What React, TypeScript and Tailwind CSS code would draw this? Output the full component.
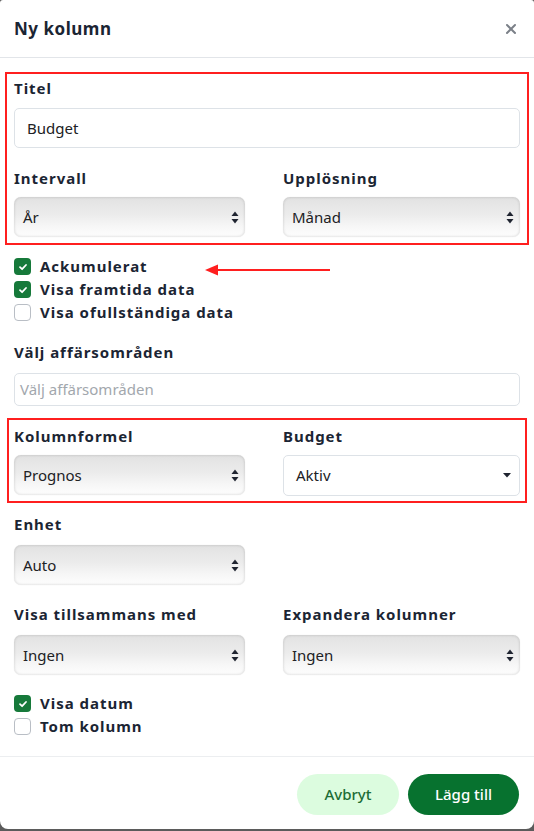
import React from 'react';

const font = { fontFamily: '"Noto Sans", "Liberation Sans", sans-serif' };

const Label: React.FC<{ children: React.ReactNode }> = ({ children }) => (
  <div className="text-[15px] leading-[20px] font-bold tracking-[0.065em] text-[#1b2533]">{children}</div>
);

const UpDown = () => (
  <svg width="8" height="13" viewBox="0 0 8 13" className="shrink-0">
    <path d="M4 0.5 L7.5 5 H0.5 Z" fill="#1f2430" />
    <path d="M4 12.5 L7.5 8 H0.5 Z" fill="#1f2430" />
  </svg>
);

const NativeSelect: React.FC<{ value: string }> = ({ value }) => (
  <div className="h-[40px] rounded-[7px] flex items-center justify-between pl-[9px] pr-[6px] bg-[linear-gradient(to_bottom,#e2e2e2_0%,#ececec_45%,#f7f7f7_75%,#fdfdfd_100%)] shadow-[inset_0_0_3px_rgba(0,0,0,0.18),0_0_1px_rgba(0,0,0,0.12)]">
    <span className="text-[15px] text-[#202124]">{value}</span>
    <UpDown />
  </div>
);

const Checkbox: React.FC<{ checked?: boolean; label: string }> = ({ checked, label }) => (
  <div className="flex items-center h-[23px]">
    {checked ? (
      <span className="w-[17px] h-[17px] rounded-[4px] bg-[#16793a] flex items-center justify-center">
        <svg width="10" height="10" viewBox="0 0 10 10">
          <path d="M2 5.2 L4.1 7.2 L8 3" stroke="white" strokeWidth="1.8" fill="none" strokeLinecap="round" strokeLinejoin="round" />
        </svg>
      </span>
    ) : (
      <span className="w-[17px] h-[17px] rounded-[4px] border border-[#b9bec5] bg-white" />
    )}
    <span className="ml-[9px] text-[15px] font-bold tracking-[0.065em] text-[#1b2533]">{label}</span>
  </div>
);

export default function App() {
  return (
    <div className="h-[831px] bg-[#5b5b5b]" style={font}>
      <div className="h-[829px] bg-white rounded-b-[8px] rounded-t-[3px] flex flex-col">
        {/* Header */}
        <div className="h-[58px] px-[14px] flex items-center justify-between border-b border-[#e2e5e9]">
          <h2 className="text-[17px] font-bold tracking-[0.03em] text-[#1b2533]">Ny kolumn</h2>
          <svg width="12" height="12" viewBox="0 0 12 12" className="mr-[3px]">
            <path d="M2 2 L10 10 M10 2 L2 10" stroke="#7b8088" strokeWidth="2" strokeLinecap="round" />
          </svg>
        </div>

        {/* Body */}
        <div className="flex-1 px-[14px] pt-[14px]">
          <div className="-mx-[9px] px-[7px] pt-[4px] pb-[6px] border-2 border-[#ff1f1f]">
            <Label>Titel</Label>
            <div className="mt-[10px] h-[40px] rounded-[5px] border border-[#dde2e7] flex items-center px-[12px] text-[15px] text-[#202124]">
              Budget
            </div>
            <div className="mt-[20px] grid grid-cols-[231px_1fr] gap-x-[38px]">
              <div>
                <Label>Intervall</Label>
                <div className="mt-[9px]"><NativeSelect value="År" /></div>
              </div>
              <div>
                <Label>Upplösning</Label>
                <div className="mt-[9px]"><NativeSelect value="Månad" /></div>
              </div>
            </div>
          </div>

          <div className="relative mt-[10px]">
            <Checkbox checked label="Ackumulerat" />
            <Checkbox checked label="Visa framtida data" />
            <Checkbox label="Visa ofullständiga data" />
            <svg width="126" height="14" viewBox="0 0 126 14" className="absolute left-[190px] top-[8px]">
              <path d="M14 7 H126" stroke="#ff1f1f" strokeWidth="2" />
              <path d="M1 7 L14 1.5 L14 12.5 Z" fill="#ff1f1f" />
            </svg>
          </div>

          <div className="mt-[18px]">
            <Label>Välj affärsområden</Label>
            <div className="mt-[11px] h-[33px] rounded-[5px] border border-[#dde2e7] flex items-center px-[5px] text-[15px] text-[#a2a7ad]">
              Välj affärsområden
            </div>
          </div>

          <div className="mt-[12px] -mx-[7px] px-[5px] pt-[6px] pb-[5px] border-2 border-[#ff1f1f]">
            <div className="grid grid-cols-[231px_1fr] gap-x-[38px]">
              <div>
                <Label>Kolumnformel</Label>
                <div className="mt-[9px]"><NativeSelect value="Prognos" /></div>
              </div>
              <div>
                <Label>Budget</Label>
                <div className="mt-[9px] h-[41px] rounded-[5px] border border-[#dde2e7] bg-white flex items-center justify-between pl-[12px] pr-[8px]">
                  <span className="text-[15px] text-[#202124]">Aktiv</span>
                  <svg width="8" height="5" viewBox="0 0 8 5">
                    <path d="M0 0 H8 L4 4.5 Z" fill="#1f2430" />
                  </svg>
                </div>
              </div>
            </div>
          </div>

          <div className="mt-[11px] grid grid-cols-[231px_1fr] gap-x-[38px]">
            <div>
              <Label>Enhet</Label>
              <div className="mt-[11px]"><NativeSelect value="Auto" /></div>
            </div>
          </div>

          <div className="mt-[19px] grid grid-cols-[231px_1fr] gap-x-[38px]">
            <div>
              <Label>Visa tillsammans med</Label>
              <div className="mt-[11px]"><NativeSelect value="Ingen" /></div>
            </div>
            <div>
              <Label>Expandera kolumner</Label>
              <div className="mt-[11px]"><NativeSelect value="Ingen" /></div>
            </div>
          </div>

          <div className="mt-[17px]">
            <Checkbox checked label="Visa datum" />
            <Checkbox label="Tom kolumn" />
          </div>
        </div>

        {/* Footer */}
        <div className="h-[73px] border-t border-[#eceef0] flex items-start justify-end gap-[9px] pt-[17px] pr-[15px]">
          <button className="h-[41px] w-[102px] rounded-full bg-[#dcfcdf] text-[#1c6d36] text-[15px] font-medium">Avbryt</button>
          <button className="h-[41px] w-[111px] rounded-full bg-[#07722f] text-white text-[15px] font-medium">Lägg till</button>
        </div>
      </div>
    </div>
  );
}
